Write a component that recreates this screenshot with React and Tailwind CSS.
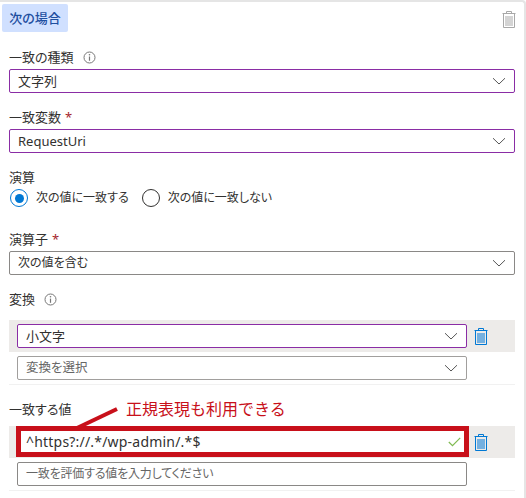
import React from 'react';

const Chevron = () => (
  <svg width="14" height="8" viewBox="0 0 14 8" fill="none" className="shrink-0">
    <path d="M1 1.2 L7 7 L13 1.2" stroke="#555" strokeWidth="1" />
  </svg>
);

const Info = () => (
  <svg width="13" height="13" viewBox="0 0 13 13" fill="none">
    <circle cx="6.5" cy="6.5" r="5.5" stroke="#777" strokeWidth="1" />
    <path d="M6.5 5.6 V9.8" stroke="#777" strokeWidth="1.2" />
    <circle cx="6.5" cy="3.8" r="0.8" fill="#777" />
  </svg>
);

const Trash = ({ color = '#0078d4', fill = '#74b0e0' }) => (
  <svg width="14" height="17" viewBox="0 0 14 17" fill="none">
    <path d="M0.5 2.5 H13.5 M4.5 2.5 V0.5 H9.5 V2.5" stroke={color} strokeWidth="1" />
    <path d="M1.5 2.5 V16.5 H12.5 V2.5" stroke={color} strokeWidth="1" />
    <rect x="3" y="5" width="8" height="10" fill={fill} />
  </svg>
);

const Select = ({ value, border = 'border-[#8a2da5]', text = 'text-[13px] text-[#323130]', className = '' }) => (
  <div className={`h-6 flex items-center justify-between pl-[8px] pr-[8px] bg-white border rounded-[2px] ${border} ${className}`}>
    <span className={text}>{value}</span>
    <Chevron />
  </div>
);

const Label = ({ children, required, info }) => (
  <div className="flex items-center h-[18px] text-[#323130]">
    <span>{children}</span>
    {required && <span className="ml-[4px] text-[#a4262c]">*</span>}
    {info && <span className="ml-[9px] flex"><Info /></span>}
  </div>
);

const Radio = ({ checked, label }) => (
  <div className="flex items-center gap-[8px]">
    <span className={`w-[18px] h-[18px] rounded-full bg-white flex items-center justify-center border-[1.5px] ${checked ? 'border-[#0078d4]' : 'border-[#323130]'}`}>
      {checked && <span className="w-[9px] h-[9px] rounded-full bg-[#0078d4]" />}
    </span>
    <span className="text-[12px] text-[#323130]">{label}</span>
  </div>
);

export default function App() {
  return (
    <div
      className="relative w-[526px] h-[498px] overflow-hidden bg-white text-[13px] leading-[18px] border-t-[2px] border-r-[2px] border-[#e5e5e5] rounded-tr-[4px] [font-feature-settings:'palt']"
      style={{ fontFamily: '"Noto Sans", "Noto Sans CJK JP", sans-serif' }}
    >
      <div className="flex justify-between items-start pl-[2px] pr-[8px] pt-[2px]">
        <div className="h-[28px] w-[66px] flex items-center justify-center rounded-[2px] bg-[#d0e0ff] text-[#1f4f9f] font-medium">次の場合</div>
        <div className="mt-[7px]"><Trash color="#a8a8a8" fill="#d4d4d4" /></div>
      </div>

      <div className="pl-[9px] pr-[9px]">
        <div className="mt-[16px]"><Label info>一致の種類</Label></div>
        <Select value="文字列" className="mt-[3px]" />

        <div className="mt-[15px]"><Label required>一致変数</Label></div>
        <Select value="RequestUri" className="mt-[3px]" />

        <div className="mt-[15px]"><Label>演算</Label></div>
        <div className="mt-[3px] ml-[1px] flex gap-[13px]">
          <Radio checked label="次の値に一致する" />
          <Radio label="次の値に一致しない" />
        </div>

        <div className="mt-[23px]"><Label required>演算子</Label></div>
        <Select value="次の値を含む" border="border-[#8a8886]" text="text-[12px] text-[#323130]" className="mt-[3px]" />

        <div className="mt-[15px]"><Label info>変換</Label></div>

        <div className="mt-[12px] h-[32px] bg-[#edebe9] flex items-center">
          <Select value="小文字" className="ml-[8px] w-[450px]" />
          <div className="ml-[7px] flex"><Trash /></div>
        </div>
        <Select value="変換を選択" text="text-[12.5px] text-[#666]" border="border-[#a19f9d]" className="ml-[8px] mt-[4px] w-[450px]" />
        <div className="mt-[4px] h-px bg-[#f1f1f1]" />

        <div className="mt-[15px]"><Label>一致する値</Label></div>
        <div className="mt-[8px] h-[32px] bg-[#edebe9] flex items-start">
          <div className="ml-[7px] w-[453px] h-[31px] border-[5px] border-[#c8101a] bg-white flex items-center justify-between pl-[5px] pr-[3px]">
            <span className="text-[14px] tracking-[0.2px] text-[#323130]">^https?://.*/wp-admin/.*$</span>
            <svg width="13" height="10" viewBox="0 0 13 10" fill="none">
              <path d="M0.8 5 L4.5 8.6 L12.2 0.8" stroke="#7fba50" strokeWidth="1.2" />
            </svg>
          </div>
          <div className="ml-[5px] mt-[8px] flex"><Trash /></div>
        </div>
        <div className="ml-[8px] mt-[4px] w-[450px] h-6 flex items-center px-[8px] bg-white border border-[#8a8886] rounded-[2px] text-[12px] tracking-[-0.2px] text-[#666]">
          一致を評価する値を入力してください
        </div>
        <div className="mt-[4px] h-px bg-[#f1f1f1]" />
      </div>

      {/* callout drawn over the form */}
      <svg className="absolute left-[70px] top-[403px]" width="52" height="24" viewBox="0 0 52 24" fill="none">
        <path d="M7 23 L47 4" stroke="#c8101a" strokeWidth="4" />
      </svg>
      <span className="absolute left-[126px] top-[395px] text-[16px] leading-[24px] text-[#c8101a] [font-feature-settings:normal]">正規表現も利用できる</span>
    </div>
  );
}
